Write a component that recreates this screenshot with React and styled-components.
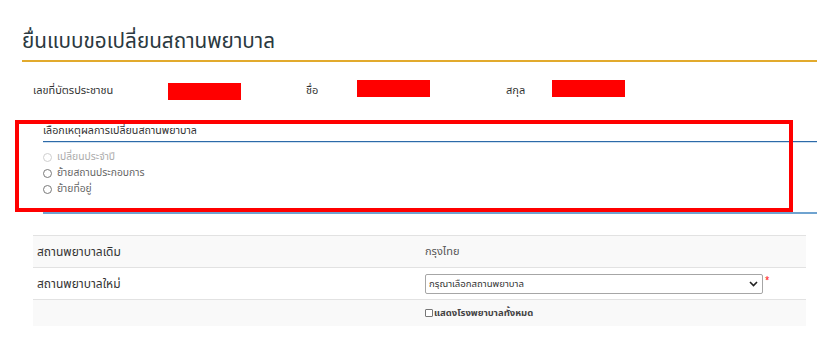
import React from "react";
import styled, { createGlobalStyle } from "styled-components";

const GlobalStyle = createGlobalStyle`
  html, body { margin: 0; padding: 0; background: #ffffff; }
  body {
    font-family: "Noto Sans Thai", "Noto Sans", "Liberation Sans", sans-serif;
    color: #333333;
  }
  * { box-sizing: border-box; }
`;

const Page = styled.div`
  position: relative;
  width: 817px;
  height: 342px;
  padding-left: 22px;
  overflow: hidden;
`;

const Title = styled.h2`
  margin: 0;
  padding-top: 26px;
  font-size: 20.7px;
  line-height: 32px;
  font-weight: 400;
  color: #2b3940;
`;

const GoldRule = styled.div`
  margin-top: 2px;
  height: 2px;
  background: #e2aa2d;
`;

const InfoRow = styled.div`
  display: grid;
  grid-template-columns: 135px 138px 51px 149px 46px 73px;
  height: 24px;
  margin-top: 17px;
  padding-left: 11px;
`;

const InfoLabel = styled.span`
  font-size: 11px;
  line-height: 24px;
  color: #333333;
`;

const Redacted = styled.span`
  display: block;
  width: 73px;
  height: 17px;
  margin-top: ${(p) => p.$offset}px;
  background: #ff0000;
`;

const Fieldset = styled.div`
  margin-top: 19px;
  margin-left: 21px;
`;

const Legend = styled.div`
  font-size: 10.7px;
  line-height: 19px;
  color: #333333;
  border-bottom: 1px solid #2d6aa8;
  box-shadow: 0 1px 0 #cfe0f0;
`;

const Options = styled.div`
  display: flex;
  flex-direction: column;
  margin-top: 7px;
`;

const Option = styled.label`
  display: flex;
  align-items: center;
  gap: 5px;
  height: 16px;
  font-size: 10.3px;
  color: ${(p) => (p.$disabled ? "#acacac" : "#666666")};
`;

const Radio = styled.input.attrs({ type: "radio" })`
  appearance: none;
  margin: 0;
  width: 9px;
  height: 9px;
  border-radius: 50%;
  border: 1px solid ${(p) => (p.disabled ? "#cfcfcf" : "#7a7a7a")};
  background: #fff;
`;

const BlueRule = styled.div`
  margin-top: 15px;
  height: 2px;
  background: #6fa3d0;
`;

const Table = styled.div`
  margin: 21px 11px 0 11px;
`;

const Row = styled.div`
  display: grid;
  grid-template-columns: 388px 1fr;
  align-items: center;
  height: ${(p) => p.$h}px;
  border-top: 1px solid #e2e2e2;
  background: ${(p) => (p.$striped ? "#f9f9f9" : "#ffffff")};
`;

const Cell = styled.div`
  display: flex;
  align-items: center;
  padding: 0 4px;
  font-size: ${(p) => (p.$muted ? "11px" : "12px")};
  color: ${(p) => (p.$muted ? "#555555" : "#333333")};
`;

const SelectBox = styled.div`
  display: flex;
  align-items: center;
  width: 338px;
  height: 20px;
  padding: 0 3px;
  border: 1px solid #a6a6a6;
  border-radius: 2px;
  background: #fff;
  font-size: 9.6px;
  color: #333;
`;

const Chevron = styled.svg`
  margin-left: auto;
  margin-right: 1px;
`;

const Required = styled.span`
  align-self: flex-start;
  margin-left: 2px;
  margin-top: 3px;
  font-size: 8px;
  line-height: 8px;
  color: #ff0000;
`;

const CheckLabel = styled.label`
  display: flex;
  align-items: center;
  font-size: 9.5px;
  font-weight: 700;
  color: #444;
`;

const Checkbox = styled.input.attrs({ type: "checkbox" })`
  appearance: none;
  margin: 0 1px 0 0;
  width: 8px;
  height: 8px;
  border: 1px solid #777;
  border-radius: 1px;
  background: #fff;
`;

const Annotation = styled.div`
  position: absolute;
  left: 15px;
  top: 120px;
  width: 778px;
  height: 92px;
  border: 4px solid #ff0000;
  pointer-events: none;
`;

export default function App() {
  return (
    <>
      <GlobalStyle />
      <Page>
        <Title>ยื่นแบบขอเปลี่ยนสถานพยาบาล</Title>
        <GoldRule />
        <InfoRow>
          <InfoLabel>เลขที่บัตรประชาชน</InfoLabel>
          <Redacted $offset={4} />
          <InfoLabel>ชื่อ</InfoLabel>
          <Redacted $offset={1} />
          <InfoLabel>สกุล</InfoLabel>
          <Redacted $offset={1} />
        </InfoRow>
        <Fieldset>
          <Legend>เลือกเหตุผลการเปลี่ยนสถานพยาบาล</Legend>
          <Options>
            <Option $disabled>
              <Radio name="reason" disabled />
              เปลี่ยนประจำปี
            </Option>
            <Option>
              <Radio name="reason" />
              ย้ายสถานประกอบการ
            </Option>
            <Option>
              <Radio name="reason" />
              ย้ายที่อยู่
            </Option>
          </Options>
          <BlueRule />
        </Fieldset>
        <Table>
          <Row $h={32} $striped>
            <Cell>สถานพยาบาลเดิม</Cell>
            <Cell $muted>กรุงไทย</Cell>
          </Row>
          <Row $h={32}>
            <Cell>สถานพยาบาลใหม่</Cell>
            <Cell>
              <SelectBox>
                กรุณาเลือกสถานพยาบาล
                <Chevron width="9" height="6" viewBox="0 0 9 6">
                  <path d="M1 1 L4.5 4.5 L8 1" fill="none" stroke="#222" strokeWidth="1.6" />
                </Chevron>
              </SelectBox>
              <Required>*</Required>
            </Cell>
          </Row>
          <Row $h={27} $striped>
            <Cell />
            <Cell>
              <CheckLabel>
                <Checkbox />
                แสดงโรงพยาบาลทั้งหมด
              </CheckLabel>
            </Cell>
          </Row>
        </Table>
        <Annotation />
      </Page>
    </>
  );
}
